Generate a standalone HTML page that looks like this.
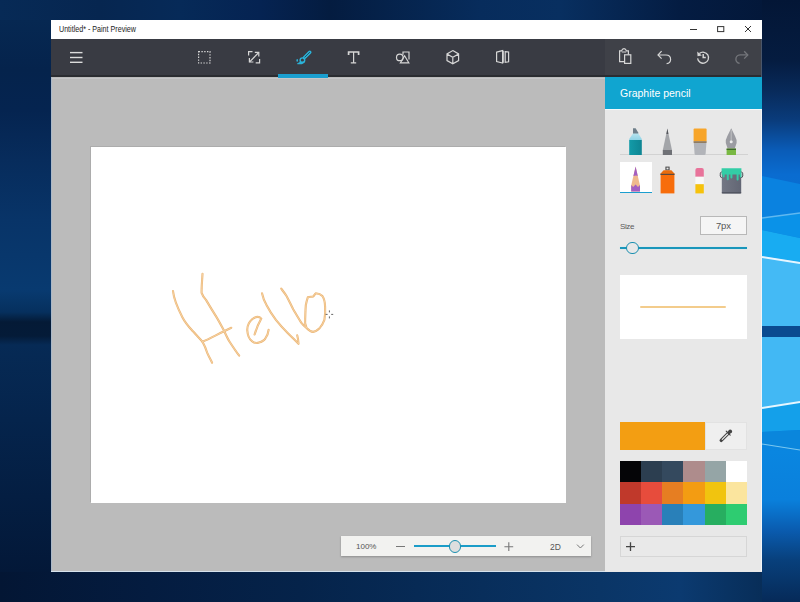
<!DOCTYPE html>
<html><head><meta charset="utf-8">
<style>
*{margin:0;padding:0;box-sizing:border-box}
html,body{width:800px;height:602px;overflow:hidden}
body{position:relative;font-family:"Liberation Sans",sans-serif;background:#05214b}
.a{position:absolute}
#dtop{left:0;top:0;width:800px;height:20px;background:linear-gradient(to right,#072a56 0,#062650 100px,#062a58 180px,#052352 260px,#041c40 330px,#072c5c 480px,#082f60 560px,#041c42 680px,#031636 800px)}
#dleft{left:0;top:20px;width:51px;height:552px;background:linear-gradient(to bottom,#062852 0,#05234c 50px,#052450 90px,#072c5c 140px,#083468 200px,#083a70 270px,#06305e 292px,#041a36 302px,#041b38 316px,#062a55 325px,#05244c 400px,#031838 552px)}
#dbot{left:0;top:572px;width:800px;height:30px;background:linear-gradient(to right,#031634 0,#041c40 150px,#05234a 300px,#0a3566 600px,#0b3a70 680px,#06284e 800px)}
#dright{left:762px;top:0;width:38px;height:602px}
#win{left:51px;top:20px;width:711px;height:552px;background:#bbbbbb;overflow:hidden}
#title{left:0;top:0;width:711px;height:19px;background:#fff}
#title .t{left:8px;top:3.7px;font-size:8.6px;color:#222;white-space:nowrap;transform:scaleX(0.83);transform-origin:0 0}
#tb{left:0;top:19px;width:711px;height:38px;background:#393b43}
#tbr{left:554px;top:0;width:157px;height:38px;background:#3f4148}
#uline{left:227px;top:35.2px;width:50px;height:3.6px;background:#1a9ecf}
#canvas{left:40px;top:127px;width:475px;height:356px;background:#fff;box-shadow:-1px -1px 0 0 #acacac}
#panel{left:554px;top:57px;width:157px;height:495px;background:#e8e8e8}
#phead{left:0;top:0;width:157px;height:31.6px;background:#10a5d0}
#phead .t{left:15px;top:10px;font-size:10.5px;color:#fff;white-space:nowrap}
#zoom{left:290px;top:516px;width:250px;height:20px;background:#f2f2f0;box-shadow:0 1px 2px rgba(0,0,0,.25)}
.txt{white-space:nowrap;color:#555}
</style></head><body>
<div id="dtop" class="a"></div>
<div id="dleft" class="a"></div>
<div id="dbot" class="a"></div>
<svg id="dright" class="a" width="38" height="602" viewBox="762 0 38 602">
  <defs>
    <linearGradient id="rg" x1="0" y1="0" x2="0" y2="602" gradientUnits="userSpaceOnUse">
      <stop offset="0" stop-color="#031636"/>
      <stop offset="0.1" stop-color="#051c40"/>
      <stop offset="0.15" stop-color="#082a5a"/>
      <stop offset="0.2" stop-color="#0a3c7c"/>
      <stop offset="0.25" stop-color="#0a5cb8"/>
      <stop offset="0.29" stop-color="#0a6cd0"/>
      <stop offset="0.75" stop-color="#0a86e0"/>
      <stop offset="0.83" stop-color="#0a80dc"/>
      <stop offset="0.88" stop-color="#0a5cb0"/>
      <stop offset="0.93" stop-color="#08407c"/>
      <stop offset="1" stop-color="#062a58"/>
    </linearGradient>
  </defs>
  <rect x="762" y="0" width="38" height="602" fill="url(#rg)"/>
  <polygon points="762,176 800,184 800,214 762,218" fill="#0a82e0"/>
  <polygon points="762,218 800,213 800,238 762,230" fill="#0a92e8"/>
  <polygon points="762,230 800,238 800,262 762,256" fill="#18acf2"/>
  <polygon points="762,256 800,262 800,326 762,326" fill="#44baf5"/>
  <rect x="762" y="326" width="38" height="11" fill="#0a4a90"/>
  <polygon points="762,337 800,337 800,402 762,408" fill="#42b8f4"/>
  <polygon points="762,408 800,402 800,430 762,432" fill="#14a0ea"/>
  <polygon points="762,432 800,430 800,450 762,444" fill="#0a86dc"/>
  <line x1="762" y1="218" x2="800" y2="213" stroke="#60b8f0" stroke-width="1.4"/>
  <line x1="762" y1="257" x2="800" y2="263" stroke="#e6f6ff" stroke-width="2"/>
  <line x1="762" y1="408" x2="800" y2="402" stroke="#e6f6ff" stroke-width="2"/>
  <line x1="762" y1="444" x2="800" y2="450" stroke="#7cc8f0" stroke-width="1.2"/>
</svg>
<div id="win" class="a">
  <div id="title" class="a"><div class="t a">Untitled* - Paint Preview</div></div>
  <div id="tb" class="a">
    <div id="tbr" class="a"></div>
    <div class="a" style="left:0;top:36.4px;width:711px;height:1.6px;background:#2a2c31"></div><div id="uline" class="a"></div>
  </div>
  <div class="a" style="left:0;top:57.8px;width:554px;height:1.4px;background:#c5c6c9"></div><div id="canvas" class="a"></div>
  <div id="zoom" class="a"></div>
  <div class="a" style="left:710px;top:19px;width:1px;height:38px;background:#4a566a"></div>
  <div class="a" style="left:0;top:57px;width:1px;height:495px;background:#aab8c8"></div>
  <div class="a" style="left:0;top:551px;width:711px;height:1px;background:#d6e2ec"></div>
  <div id="panel" class="a">
    <div id="phead" class="a"><div class="t a">Graphite pencil</div></div>
    <div class="a" style="left:0;top:31.6px;width:157px;height:1.4px;background:#f4fafc"></div>
    <div class="a" style="left:156px;top:32px;width:1px;height:462px;background:#f2f5f8"></div>
  </div>
</div>

<svg class="a" style="left:0;top:0" width="800" height="602" viewBox="0 0 800 602" fill="none">
  <!-- window controls -->
  <g stroke="#333" stroke-width="1">
    <line x1="690" y1="29.5" x2="697" y2="29.5"/>
    <rect x="717.6" y="26.6" width="6.2" height="5"/>
    <line x1="745" y1="26" x2="751" y2="32"/>
    <line x1="751" y1="26" x2="745" y2="32"/>
  </g>
  <!-- hamburger -->
  <g stroke="#dcdcdc" stroke-width="1.4">
    <line x1="70" y1="52.6" x2="82.5" y2="52.6"/>
    <line x1="70" y1="57.5" x2="82.5" y2="57.5"/>
    <line x1="70" y1="62.3" x2="82.5" y2="62.3"/>
  </g>
  <g stroke="#d6d6d6" stroke-width="1.2">
    <!-- select -->
    <rect x="198.6" y="51.6" width="11.4" height="11.4" stroke-dasharray="1.4 1.4"/>
    <!-- resize -->
    <polyline points="248.6,55.5 248.6,51.6 252.5,51.6"/>
    <polyline points="259.6,59 259.6,62.9 255.7,62.9"/>
    <line x1="249.5" y1="62" x2="258.7" y2="52.5"/>
    <polyline points="254.8,52.4 258.8,52.4 258.8,56.4"/>
    <polyline points="249.4,58 249.4,62 253.4,62"/>
    <!-- T -->
    <path d="M348.6,55 V52 H358.6 V55" stroke-width="1.7"/><path d="M353.6,52 V62.6 M350.8,62.8 H356.2"/>
    <!-- shapes -->
    <circle cx="399.8" cy="57.4" r="3.3"/>
    <path d="M403,54.8 V52 H409 V59.4"/>
    <path d="M404.6,55.8 L408.8,62.8 H400.4 Z"/>
    <!-- cube -->
    <path d="M452.8,50.6 L458.6,53.9 V60.6 L452.8,63.8 L447,60.6 V53.9 Z M447,53.9 L452.8,57.2 L458.6,53.9 M452.8,57.2 V63.8"/>
    <!-- 3d view -->
    <path d="M496.6,52.2 L502.6,50.6 V63 L496.6,61.6 Z M505.2,51.6 L508.6,52 V61.8 L505.2,62.4 Z"/><path d="M503.4,50.8 V62.8" stroke-width="0.9"/>
    <!-- paste -->
    <path d="M628.4,54.6 V50.8 H626.4 Q625.8,48.6 624,48.6 Q622.2,48.6 621.6,50.8 H619.6 V61.6 H624.2"/><path d="M621.8,52 H626.2" stroke-width="1"/>
    <rect x="624.6" y="54.8" width="6.2" height="8.6"/>
    <!-- undo -->
    <path d="M658,55 H666 C669.5,55 670.6,57.6 670.6,59.4 C670.6,61.4 669,63.2 666.6,63.6"/>
    <polyline points="661.6,51.2 658,55 661.6,58.6"/>
    <!-- history -->
    <path d="M699.4,53.6 A5.5,5.5 0 1 1 697.6,58.4" stroke-width="1.3"/>
    <polygon points="697.2,51.6 697.6,56.2 701.8,55.4" fill="#d6d6d6" stroke="none"/>
    <polyline points="703.2,54 703.2,57.6 705.8,57.6" stroke-width="1.5"/>
  </g>
  <g stroke="#74767b" stroke-width="1.3">
    <!-- redo -->
    <path d="M747.8,54.8 H740.2 C737,54.8 735.9,57.6 735.9,59.2 C735.9,61.2 737.2,62.8 739.6,63.4"/>
    <polyline points="744.2,51.2 747.8,55 744.2,58.6"/>
  </g>
  <!-- brush (active) -->
  <g stroke="#2bb2d8" stroke-linecap="round" stroke-linejoin="round">
    <path d="M309.8,52.2 L304.4,57.6" stroke-width="3.4"/>
    <path d="M309.6,52.4 L304.8,57.2" stroke="#1d4a5c" stroke-width="0.9"/>
    <circle cx="302.4" cy="60.2" r="2.3" stroke-width="1.4"/>
    <path d="M300.6,61.8 Q299.6,63.4 297.8,63.6 L301.6,63.6 Q303.6,63.2 304.4,61.6" stroke-width="1.2" fill="#2bb2d8"/>
  </g>
  <ellipse cx="297.2" cy="60.4" rx="0.8" ry="1.3" fill="#2bb2d8"/>
</svg>

<!-- PANEL CONTENT -->
<div class="a" style="left:620px;top:154px;width:128px;height:1px;background:#d2d2d2"></div>
<div class="a" style="left:620px;top:162px;width:32px;height:31px;background:#fff"></div>
<div class="a" style="left:619.6px;top:191.6px;width:32.2px;height:1.8px;background:#1a9ecf"></div>
<svg class="a" style="left:0;top:0" width="800" height="602" viewBox="0 0 800 602">
  <!-- marker -->
  <defs>
    <linearGradient id="mk" x1="0" x2="1" y1="0" y2="0"><stop offset="0" stop-color="#139ba8"/><stop offset="1" stop-color="#0e8593"/></linearGradient>
    <linearGradient id="mc" x1="0" x2="0" y1="0" y2="1"><stop offset="0" stop-color="#b7e3ee"/><stop offset="1" stop-color="#8fd3e6"/></linearGradient>
    <linearGradient id="bk" x1="0" x2="1" y1="0" y2="0"><stop offset="0" stop-color="#737784"/><stop offset="1" stop-color="#626674"/></linearGradient>
  </defs>
  <path d="M633,128.2 L635.6,128.2 L638.2,132.4 L638.2,134 H633 Z" fill="#6f7f8a"/>
  <path d="M633,133.4 H638.4 L641.8,139 V140.2 H629.2 V139 Z" fill="url(#mc)"/>
  <rect x="629.2" y="140" width="12.6" height="15" fill="url(#mk)"/>
  <!-- gray pencil / calligraphy -->
  <path d="M667.4,128.6 L672,150.2 H662.8 Z" fill="#a3a5a9"/>
  <path d="M667.4,128.6 L668.4,134 H666.4 Z" fill="#55575c"/>
  <rect x="662.8" y="150" width="9.2" height="5" fill="#6f7176"/>
  <!-- oil brush -->
  <path d="M693.6,129.6 Q693.6,128.6 694.6,128.6 H705.6 Q706.6,128.6 706.6,129.6 V141.4 H693.6 Z" fill="#f7a52a"/>
  <rect x="693.6" y="141.2" width="13" height="1.8" fill="#8f7c62"/>
  <path d="M693.8,143 H706.4 L705.6,154 Q705.4,155 704.4,155 H695.8 Q694.8,155 694.6,154 Z" fill="#b2b4b9"/>
  <!-- fountain pen -->
  <path d="M731.2,128.2 L735,136 Q737.2,140 736.6,143 L734.8,148.6 H727.6 L725.8,143 Q725.2,140 727.4,136 Z" fill="#9b9ca2"/>
  <circle cx="731.2" cy="141.8" r="1.5" fill="#ececec"/>
  <line x1="731.2" y1="130" x2="731.2" y2="140.6" stroke="#d8d8d8" stroke-width="0.6"/>
  <rect x="726.6" y="148.6" width="9.4" height="6.4" fill="#79b843"/>
  <rect x="726.6" y="148.6" width="9.4" height="1.4" fill="#3f6a2a"/>
  <!-- graphite pencil -->
  <path d="M635.6,166.6 L640,185.6 V191.6 H631.2 V185.6 Z" fill="#efb98d"/>
  <path d="M635.6,166.6 L637.8,176 Q636.4,175 633.4,176 Z" fill="#a35ec2"/>
  <path d="M631.2,185 L633.2,187 L635.6,184.6 L638,187 L640,185 V191.6 H631.2 Z" fill="#a35ec2"/>
  <!-- spray can -->
  <rect x="665.4" y="166.6" width="4.2" height="3.8" fill="#4a4a4a"/>
  <rect x="666.5" y="167.6" width="2" height="1.8" fill="#e8e8e8"/>
  <path d="M663.6,170.3 H671.4 L674.4,173.6 V174.4 H660.6 V173.6 Z" fill="#ea6c0c"/>
  <rect x="660.4" y="173.8" width="14.2" height="1.2" fill="#5a4a40"/>
  <rect x="660.6" y="175" width="13.8" height="18.4" fill="#f76d0b"/>
  <!-- eraser -->
  <path d="M695.4,170 Q695.4,168 697.4,168 H701.8 Q703.8,168 703.8,170 V176.8 H695.4 Z" fill="#e8739a"/>
  <rect x="695.4" y="176.8" width="8.4" height="7.4" fill="#f8f8f6"/>
  <rect x="695.4" y="184.2" width="8.4" height="9.2" fill="#f6c20c"/>
  <!-- paint bucket -->
  <path d="M721.8,172 H741.2 V192.6 Q741.2,193.4 740.4,193.4 H722.6 Q721.8,193.4 721.8,192.6 Z" fill="url(#bk)"/>
  <rect x="721.8" y="192.2" width="19.4" height="1.2" fill="#4e515c"/>
  <path d="M721.6,168.2 H741.4 V176.6 Q741.4,177.6 740.6,177.6 Q739.8,177.6 739.8,176.6 V174.6 H738.6 V179.6 Q738.6,180.6 737.6,180.6 Q736.6,180.6 736.6,179.6 V174.6 H732.4 V177.6 Q732.4,178.6 731.4,178.6 Q730.4,178.6 730.4,177.6 V174.6 H728.8 V179.2 Q728.8,180.2 727.8,180.2 Q726.8,180.2 726.8,179.2 V174.6 H724.6 V176.4 Q724.6,177.4 723.6,177.4 Q722.6,177.4 722.6,176.4 V174.6 H721.6 Z" fill="#33cda6"/>
  <path d="M721.6,171.6 Q719.8,172.4 720.2,176 L721.6,178" stroke="#4a4d55" stroke-width="1" fill="none"/>
  <path d="M741.4,171.6 Q743.2,172.4 742.8,176 L741.4,178" stroke="#4a4d55" stroke-width="1" fill="none"/>
</svg>
<div class="a txt" style="left:620px;top:222px;font-size:8px;letter-spacing:-0.4px;color:#5a5a5a">Size</div>
<div class="a" style="left:700px;top:216px;width:47px;height:19px;background:#f5f5f5;border:1px solid #b8b8b8"></div>
<div class="a txt" style="left:716px;top:220px;font-size:9.5px;letter-spacing:-0.2px;color:#555">7px</div>
<div class="a" style="left:620px;top:246.6px;width:127px;height:2.4px;background:#1996bb;box-shadow:0 0 1px #8fe0f5"></div>
<div class="a" style="left:626.4px;top:241.6px;width:12.4px;height:12.4px;border-radius:50%;background:#e8e8e8;border:1.6px solid #1a8fb0"></div>
<div class="a" style="left:620px;top:275px;width:127px;height:64px;background:#fff"></div>
<div class="a" style="left:640px;top:305.6px;width:86px;height:2.6px;background:#f3cc8c;border-radius:1px"></div>
<div class="a" style="left:620px;top:422px;width:85px;height:28px;background:#f39e12"></div>
<div class="a" style="left:705px;top:422px;width:42px;height:28px;background:#efefef;box-shadow:inset 0 0 0 1px #e2e2e2"></div>
<svg class="a" style="left:715px;top:424px" width="24" height="24" viewBox="0 0 24 24">
  <path d="M6.2,16.4 L14.2,8.4" stroke="#444" stroke-width="3.3" stroke-linecap="round"/>
  <path d="M7.2,15.4 L12.6,10" stroke="#efefef" stroke-width="1.1" stroke-linecap="round"/>
  <path d="M11.2,7.2 L15.2,11.2" stroke="#444" stroke-width="1.1" stroke-linecap="round"/>
  <circle cx="15.2" cy="7.4" r="1.9" fill="#444"/>
</svg>
<div class="a" style="left:620px;top:461px;width:127px;height:64px;display:grid;grid-template-columns:repeat(6,1fr);grid-template-rows:repeat(3,1fr)">
  <div style="background:#050507"></div><div style="background:#2c3e50"></div><div style="background:#34495e"></div><div style="background:#ae8c8c"></div><div style="background:#95a5a6"></div><div style="background:#ffffff"></div>
  <div style="background:#c0392b"></div><div style="background:#e74c3c"></div><div style="background:#e67e22"></div><div style="background:#f39c12"></div><div style="background:#f1c40f"></div><div style="background:#fbe59e"></div>
  <div style="background:#8e44ad"></div><div style="background:#9b59b6"></div><div style="background:#2980b9"></div><div style="background:#3498db"></div><div style="background:#27ae60"></div><div style="background:#2ecc71"></div>
</div>
<div class="a" style="left:620px;top:536px;width:127px;height:21px;background:#e9e9e9;border:1px solid #d6d6d6"></div>
<svg class="a" style="left:624px;top:540px" width="14" height="14" viewBox="0 0 14 14"><path d="M2,6.6 H11 M6.5,2.2 V11" stroke="#444" stroke-width="1.3"/></svg>
<!-- ZOOM BAR -->
<div class="a txt" style="left:356px;top:542px;font-size:8px;color:#555">100%</div>
<div class="a" style="left:396px;top:545.6px;width:9px;height:1.2px;background:#777"></div>
<div class="a" style="left:414px;top:545px;width:82px;height:2.4px;background:#1a9cc8"></div>
<div class="a" style="left:448.6px;top:540px;width:12.6px;height:12.6px;border-radius:50%;background:#dedede;border:1.6px solid #1a8fb0"></div>
<svg class="a" style="left:503px;top:541px" width="12" height="12" viewBox="0 0 12 12"><path d="M1.4,5.7 H10.2 M5.8,1.3 V10.1" stroke="#777" stroke-width="1.1"/></svg>
<div class="a txt" style="left:550px;top:542px;font-size:8.5px;color:#555">2D</div>
<svg class="a" style="left:575px;top:542px" width="10" height="8" viewBox="0 0 10 8"><path d="M2,2.6 L5.4,6 L8.8,2.6" stroke="#777" stroke-width="1" fill="none"/></svg>
<!-- HELLO -->
<svg class="a" style="left:0;top:0" width="800" height="602" viewBox="0 0 800 602" fill="none">
  <g stroke="#ecb574" stroke-width="2.1" stroke-linecap="round" stroke-linejoin="round">
    <path d="M173,291 C173.6,297 175,303 182.5,317.4 C186,324 190,328 193,331.3 C197,336 200.5,339 202.5,341.8 C204.6,345.6 206,349 207,352.3 C208.6,356 210.6,359.6 212.1,362.7"/>
    <path d="M202.5,273.7 C202.2,280 201.4,288 201.6,292.9 C202.6,296 204,297.6 206,299.9 C209,305 212,310 215.6,315.6 C219,321 222,327 224.3,331.3 C226,335 227.6,338.6 229.6,341.8 C233,347 236,351.6 239.2,355.7"/>
    <path d="M202.5,341.8 C211,338 220,333 231.3,327.8"/>
    <path d="M254.6,334.5 C256.6,328 259,322.6 261.3,318.6 C259,316 256,316.4 252.4,319 C249,322 247,326 247.3,330.5 C247.6,335 249,339 252,341.2 C254.6,343.4 257.3,343.2 259,342.6 C262,341.6 264.6,340 265.3,338.5 C267.4,335.4 268.4,332.6 268.6,329.9"/>
    <path d="M262,293.3 C263,298 264.6,302 266.6,305.3 C269,310 272,314.6 275.9,319.9 C279.6,324.6 283.6,329 287.9,333.2 C291.6,336.8 295,340.4 298.5,343.8 C298.4,341 298,338 297.2,335.2"/>
    <path d="M281.2,288.6 C283,291 285,293.6 286.5,296 C289,300.6 291,305 293.2,309.3 C296,314 298.6,318.6 301.2,322.6 C303,325 305,326.6 306.5,327.9 C305.2,324.6 304.6,321.6 305.2,318.6 C305.4,314 305.4,309.6 305.8,305.3 C306.4,302 307,299.6 307.8,297.3 C309.6,296.6 311.4,297 313.1,296.6 C314.2,295.4 314.8,294 315.8,293.3 C318.6,293.6 320.6,294.2 322.4,296 C324.4,299 325,302.6 325.1,306.6 C325.4,311 325.2,315.6 324.4,319.9 C323,323.6 321.6,326 319.8,327.9 C317.6,330 315.4,331.6 313.1,331.9 C310.4,331.6 308.4,329.8 306.5,327.9"/>
  </g>
  <g stroke="#f8dcb4" stroke-width="0.7" stroke-linecap="round" stroke-linejoin="round">
    <path d="M173,291 C173.6,297 175,303 182.5,317.4 C186,324 190,328 193,331.3 C197,336 200.5,339 202.5,341.8 C204.6,345.6 206,349 207,352.3 C208.6,356 210.6,359.6 212.1,362.7"/>
    <path d="M202.5,273.7 C202.2,280 201.4,288 201.6,292.9 C202.6,296 204,297.6 206,299.9 C209,305 212,310 215.6,315.6 C219,321 222,327 224.3,331.3 C226,335 227.6,338.6 229.6,341.8 C233,347 236,351.6 239.2,355.7"/>
    <path d="M202.5,341.8 C211,338 220,333 231.3,327.8"/>
    <path d="M254.6,334.5 C256.6,328 259,322.6 261.3,318.6 C259,316 256,316.4 252.4,319 C249,322 247,326 247.3,330.5 C247.6,335 249,339 252,341.2 C254.6,343.4 257.3,343.2 259,342.6 C262,341.6 264.6,340 265.3,338.5 C267.4,335.4 268.4,332.6 268.6,329.9"/>
    <path d="M262,293.3 C263,298 264.6,302 266.6,305.3 C269,310 272,314.6 275.9,319.9 C279.6,324.6 283.6,329 287.9,333.2 C291.6,336.8 295,340.4 298.5,343.8 C298.4,341 298,338 297.2,335.2"/>
    <path d="M281.2,288.6 C283,291 285,293.6 286.5,296 C289,300.6 291,305 293.2,309.3 C296,314 298.6,318.6 301.2,322.6 C303,325 305,326.6 306.5,327.9 C305.2,324.6 304.6,321.6 305.2,318.6 C305.4,314 305.4,309.6 305.8,305.3 C306.4,302 307,299.6 307.8,297.3 C309.6,296.6 311.4,297 313.1,296.6 C314.2,295.4 314.8,294 315.8,293.3 C318.6,293.6 320.6,294.2 322.4,296 C324.4,299 325,302.6 325.1,306.6 C325.4,311 325.2,315.6 324.4,319.9 C323,323.6 321.6,326 319.8,327.9 C317.6,330 315.4,331.6 313.1,331.9 C310.4,331.6 308.4,329.8 306.5,327.9"/>
  </g>
  <g stroke="#555" stroke-width="0.9">
    <line x1="325.6" y1="314.4" x2="327.6" y2="314.4"/>
    <line x1="331.2" y1="314.4" x2="333.2" y2="314.4"/>
    <line x1="329.4" y1="310.4" x2="329.4" y2="312.4"/>
    <line x1="329.4" y1="316.4" x2="329.4" y2="318.4"/>
  </g>
</svg>
</body></html>
